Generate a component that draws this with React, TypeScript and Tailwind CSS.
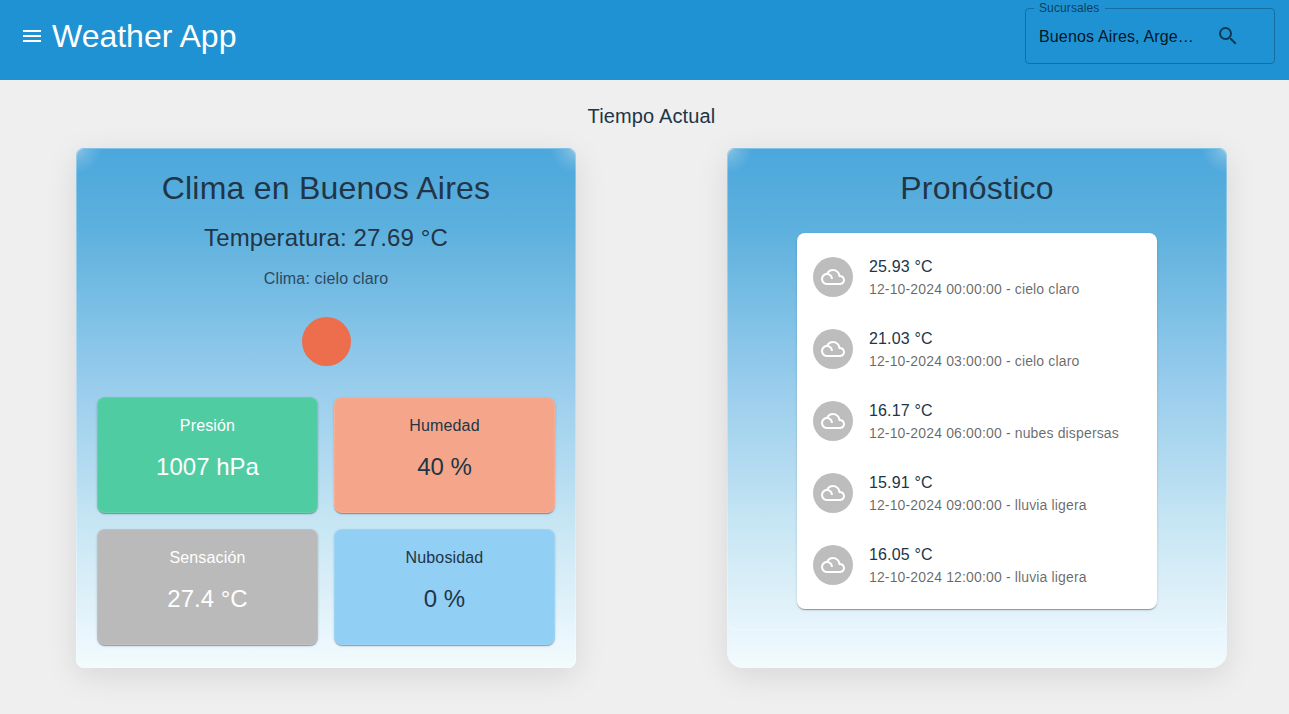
import { MdFilterDrama, MdMenu, MdSearch } from "react-icons/md";

type Metric = { label: string; value: string; tone: string };

const metrics: Metric[] = [
  { label: "Presión", value: "1007 hPa", tone: "bg-[#50cca3] text-white font-medium" },
  { label: "Humedad", value: "40 %", tone: "bg-[#f5a68a]" },
  { label: "Sensación", value: "27.4 °C", tone: "bg-[#bababa] text-white font-medium" },
  { label: "Nubosidad", value: "0 %", tone: "bg-[#91cff5]" },
];

const forecast = [
  { temp: "25.93 °C", detail: "12-10-2024 00:00:00 - cielo claro" },
  { temp: "21.03 °C", detail: "12-10-2024 03:00:00 - cielo claro" },
  { temp: "16.17 °C", detail: "12-10-2024 06:00:00 - nubes dispersas" },
  { temp: "15.91 °C", detail: "12-10-2024 09:00:00 - lluvia ligera" },
  { temp: "16.05 °C", detail: "12-10-2024 12:00:00 - lluvia ligera" },
];

const panel =
  "h-[520px] w-[500px] rounded-t-lg bg-[linear-gradient(to_bottom,#42a3db_0%,#54acdc_15%,#92caeb_45%,#afd9f1_61%,#c0e3f3_70%,#dff1f9_88%,#ebf7fe_95%,#f3fbfc_100%)] shadow-[0_8px_32px_rgba(0,0,0,0.1)]";
const glass =
  "rounded-lg border border-white/30 bg-white/5 bg-[radial-gradient(circle_at_0_0,rgba(239,239,239,0.38),rgba(239,239,239,0.16)_12px,transparent_24px),radial-gradient(circle_at_100%_0,rgba(239,239,239,0.38),rgba(239,239,239,0.16)_12px,transparent_24px)] px-5 text-center";
const raised =
  "shadow-[0_2px_1px_-1px_rgba(0,0,0,0.2),0_1px_1px_0_rgba(0,0,0,0.14),0_1px_3px_0_rgba(0,0,0,0.12)]";

function Header() {
  return (
    <header className="flex h-20 items-start justify-between bg-[#1e92d3] pr-[14px] pl-5">
      <div className="flex items-center pt-[15px] text-white">
        <MdMenu size={24} />
        <h1 className="ml-2 text-[32px] leading-[42px]">Weather App</h1>
      </div>
      <fieldset className="h-16 w-[250px] rounded border border-black/25 px-[8px]">
        <legend className="h-4 px-[5px] text-xs leading-4 tracking-[0.00938em] text-black/60">
          Sucursales
        </legend>
        <div className="flex h-10 items-center px-[5px]">
          <span className="w-[158px] pt-px text-base whitespace-nowrap tracking-[0.00938em] text-black/87">
            Buenos Aires, Arge…
          </span>
          <MdSearch size={24} className="ml-[19px] text-black/60" />
        </div>
      </fieldset>
    </header>
  );
}

function CurrentWeather() {
  return (
    <section className={`${panel} rounded-b-lg`}>
      <div className={`${glass} h-[520px] pt-[18px]`}>
        <h2 className="text-[32px] leading-[42px] tracking-[0.00735em]">Clima en Buenos Aires</h2>
        <p className="mt-[13px] text-2xl leading-8 tracking-[0.1px]">Temperatura: 27.69 °C</p>
        <p className="mt-[13px] text-base leading-6 tracking-[0.00938em] opacity-85">
          Clima: cielo claro
        </p>
        <div className="flex h-[106px] items-center justify-center">
          <div className="mt-[-5px] size-[49px] rounded-full bg-[#ed6e4c]" />
        </div>
        <div className="grid grid-cols-2 gap-4">
          {metrics.map((m) => (
            <div key={m.label} className={`h-[116px] rounded-lg border border-white/10 pt-4 ${m.tone} ${raised}`}>
              <p className="text-base leading-6 tracking-[0.00938em]">{m.label}</p>
              <p className="mt-[13px] text-2xl leading-8">{m.value}</p>
            </div>
          ))}
        </div>
      </div>
    </section>
  );
}

function Forecast() {
  return (
    <section className={`${panel} rounded-b-2xl`}>
      <div className={`${glass} h-[482px] pt-[18px]`}>
        <h2 className="text-[32px] leading-[42px] tracking-[0.00735em]">Pronóstico</h2>
        <ul className={`mx-auto mt-6 w-[360px] rounded-lg bg-white py-2 text-left ${raised}`}>
          {forecast.map((f) => (
            <li key={f.detail} className="flex h-[72px] items-center gap-4 px-4">
              <span className="flex size-10 shrink-0 items-center justify-center rounded-full bg-[#bdbdbd] text-white">
                <MdFilterDrama size={24} />
              </span>
              <div>
                <p className="text-base leading-6 tracking-[0.00938em]">{f.temp}</p>
                <p className="text-sm leading-5 tracking-[0.01071em] text-black/60">{f.detail}</p>
              </div>
            </li>
          ))}
        </ul>
      </div>
    </section>
  );
}

export default function App() {
  return (
    <div className="min-h-[714px] bg-[#efefef] font-['Liberation_Sans',Arial,sans-serif] text-[#213547]">
      <Header />
      <main>
        <h2 className="pt-5 pl-[14px] text-center text-xl leading-8 tracking-[0.0075em]">
          Tiempo Actual
        </h2>
        <div className="mt-4 ml-[76px] flex gap-[151px]">
          <CurrentWeather />
          <Forecast />
        </div>
      </main>
    </div>
  );
}
